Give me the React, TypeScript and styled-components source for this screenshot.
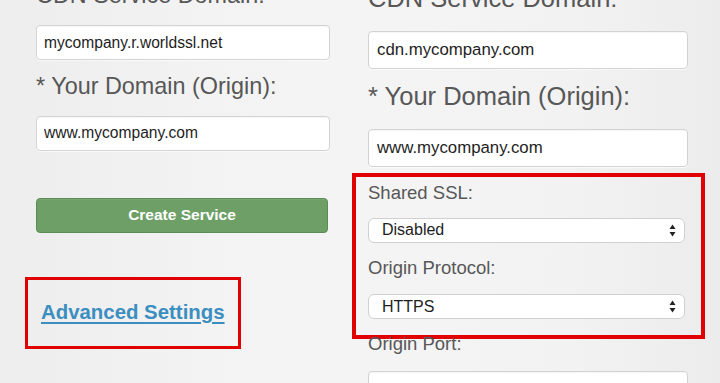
import React from 'react';
import styled, { createGlobalStyle } from 'styled-components';

const GlobalStyle = createGlobalStyle`
  html, body {
    margin: 0;
    padding: 0;
  }
  body {
    font-family: 'Liberation Sans', Arial, sans-serif;
    background: #f0f0f0;
  }
`;

const Page = styled.div`
  width: 720px;
  height: 383px;
  overflow: hidden;
  display: grid;
  grid-template-columns: 294px 320px;
  column-gap: 38px;
  padding-left: 36px;
  box-sizing: border-box;
  background: linear-gradient(90deg, #ededed 0%, #f3f3f3 30%, #f4f4f4 55%, #f2f2f2 80%, #ececec 100%);
`;

const Column = styled.div<{ $shift: number }>`
  display: flex;
  flex-direction: column;
  align-items: stretch;
  margin-top: ${(p) => p.$shift}px;
`;

const Label = styled.div<{ $size: number; $gap: number }>`
  font-size: ${(p) => p.$size}px;
  line-height: 1;
  color: #575757;
  white-space: nowrap;
  margin-bottom: ${(p) => p.$gap}px;
`;

const TextInput = styled.input<{ $h: number; $size: number; $gap: number }>`
  box-sizing: border-box;
  height: ${(p) => p.$h}px;
  width: 100%;
  padding: 0 ${(p) => (p.$size > 16 ? 8 : 7)}px;
  margin: 0 0 ${(p) => p.$gap}px;
  border: 1px solid #d3d3d3;
  border-radius: 4px;
  background: #fff;
  box-shadow: inset 0 1px 1px rgba(0, 0, 0, 0.04), 0 1px 0 rgba(255, 255, 255, 0.6);
  font-family: 'Liberation Sans', Arial, sans-serif;
  font-size: ${(p) => p.$size}px;
  color: #1e1e1e;
  outline: none;
`;

const CreateButton = styled.button`
  box-sizing: border-box;
  width: 292px;
  height: 35px;
  margin: 47px 0 44px;
  border: 1px solid #5b8c55;
  border-radius: 4px;
  background: #6d9f67;
  color: #fff;
  font-family: 'Liberation Sans', Arial, sans-serif;
  font-weight: bold;
  font-size: 15.5px;
  box-shadow: inset 0 1px 0 rgba(255, 255, 255, 0.08);
`;

const Highlight = styled.div<{ $w: number; $pad: string; $ml: number; $mr: number; $mb: number }>`
  box-sizing: border-box;
  border: ${(p) => p.$w}px solid #e00000;
  padding: ${(p) => p.$pad};
  margin: 0 ${(p) => p.$mr}px ${(p) => p.$mb}px ${(p) => p.$ml}px;
`;

const LinkBox = styled(Highlight)`
  align-self: flex-start;
`;

const AdvancedLink = styled.a`
  display: block;
  font-size: 20.4px;
  line-height: 1;
  font-weight: bold;
  color: #3b8ec0;
  text-decoration: underline;
  text-underline-offset: 3px;
  text-decoration-thickness: 2px;
  white-space: nowrap;
`;

const SelectBox = styled.div<{ $gap: number }>`
  box-sizing: border-box;
  height: 25px;
  margin-bottom: ${(p) => p.$gap}px;
  padding: 0 8px 0 13px;
  display: flex;
  align-items: center;
  justify-content: space-between;
  border: 1px solid #d0d0d0;
  border-radius: 6px;
  background: #fff;
  font-size: 16px;
  color: #1e1e1e;
`;

const Arrows = () => (
  <svg width="7" height="13" viewBox="0 0 7 13">
    <path d="M3.5 0.5 L6.5 5 L0.5 5 Z" fill="#222" />
    <path d="M0.5 8 L6.5 8 L3.5 12.5 Z" fill="#222" />
  </svg>
);

const Select = ({ value, gap }: { value: string; gap: number }) => (
  <SelectBox $gap={gap}>
    <span>{value}</span>
    <Arrows />
  </SelectBox>
);

export default function App() {
  return (
    <>
      <GlobalStyle />
      <Page>
        <Column $shift={-16}>
          <Label $size={23.4} $gap={17.6}>CDN Service Domain:</Label>
          <TextInput $h={35} $size={15.6} $gap={15.2} readOnly defaultValue="mycompany.r.worldssl.net" />
          <Label $size={23.4} $gap={17.4}>* Your Domain (Origin):</Label>
          <TextInput $h={35} $size={15.6} $gap={0} readOnly defaultValue="www.mycompany.com" />
          <CreateButton>Create Service</CreateButton>
          <LinkBox $w={3} $pad="21.7px 13px 24px" $ml={-11} $mr={0} $mb={0}>
            <AdvancedLink href="#">Advanced Settings</AdvancedLink>
          </LinkBox>
        </Column>
        <Column $shift={-13.6}>
          <Label $size={25.5} $gap={19.1}>CDN Service Domain:</Label>
          <TextInput $h={38} $size={16.8} $gap={15.4} readOnly defaultValue="cdn.mycompany.com" />
          <Label $size={25.5} $gap={19.1}>* Your Domain (Origin):</Label>
          <TextInput $h={38} $size={16.8} $gap={6} readOnly defaultValue="www.mycompany.com" />
          <Highlight $w={4} $pad="6.9px 16px 16px 12px" $ml={-16} $mr={-17} $mb={-4}>
            <Label $size={18.5} $gap={15.3}>Shared SSL:</Label>
            <Select value="Disabled" gap={15.9} />
            <Label $size={18.5} $gap={17.1}>Origin Protocol:</Label>
            <Select value="HTTPS" gap={0} />
          </Highlight>
          <Label $size={18.5} $gap={17.1}>Origin Port:</Label>
          <TextInput $h={38} $size={16.8} $gap={0} readOnly defaultValue="" />
        </Column>
      </Page>
    </>
  );
}
